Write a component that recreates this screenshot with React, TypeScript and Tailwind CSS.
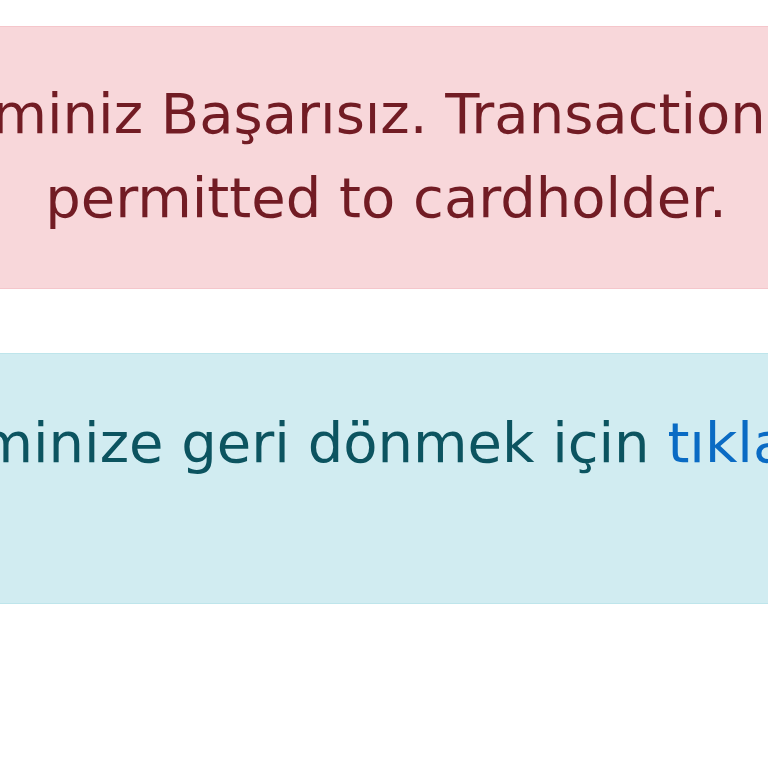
export default function App() {
  return (
    <div
      className="min-h-screen overflow-hidden bg-white pt-[26px]"
      style={{ fontFamily: '"DejaVu Sans", sans-serif' }}
    >
      <div className="flex flex-col items-center pl-1">
        <div className="w-[1260px] shrink-0 rounded border border-[#f5c6cb] bg-[#f8d7da] px-[80px] pt-[45px] pb-[48px] text-center text-[56px] leading-[84px] text-[#721c24]">
          İşleminiz Başarısız. Transaction not permitted to cardholder.
        </div>

        <div className="mt-[64px] w-[1260px] shrink-0 rounded border border-[#bee5eb] bg-[#d1ecf1] px-[80px] pt-[47px] pb-[48px] text-center text-[56px] leading-[84px] text-[#0c5460]">
          <p className="mb-[70px]">
            İşleminize geri dönmek için{' '}
            <a href="#" className="text-[#0a6bc4]">
              tıklayın.
            </a>
          </p>
        </div>
      </div>
    </div>
  )
}
